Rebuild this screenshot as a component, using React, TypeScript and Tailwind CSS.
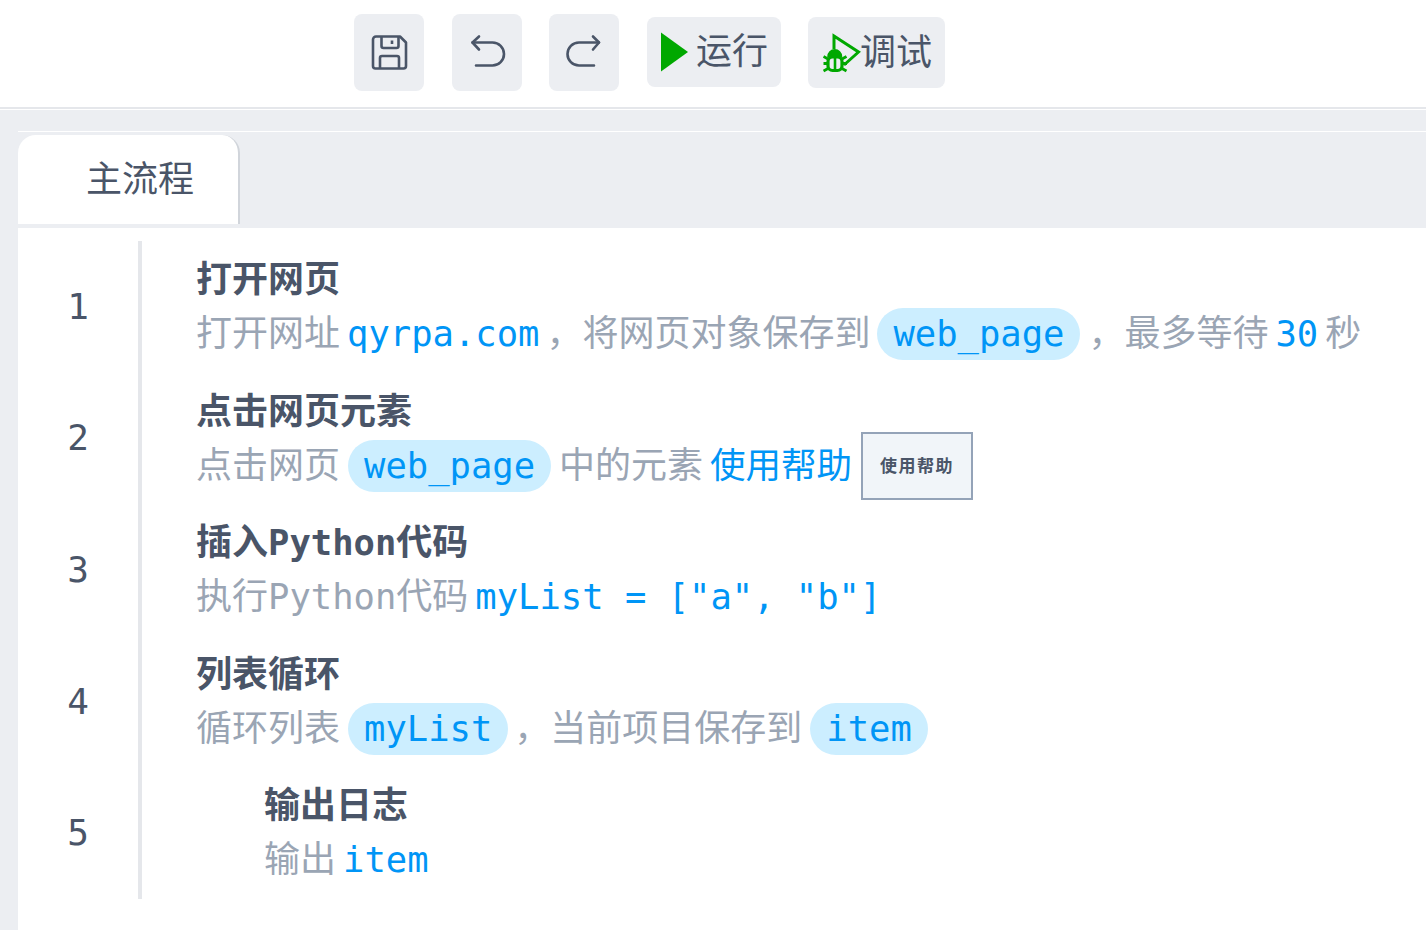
import React from "react";

const mono = "font-['DejaVu_Sans_Mono','Noto_Sans_CJK_SC',monospace]";

function Pill({ children, ml = "ml-[8px]", mr = "mr-[8px]" }: { children: React.ReactNode; ml?: string; mr?: string }) {
  return <span className={"inline-block h-[52px] leading-[52px] text-[35.5px] rounded-[26px] bg-[#cceeff] px-[16px] text-[#0095f6] " + ml + " " + mr}>{children}</span>;
}
function V({ children }: { children: React.ReactNode }) {
  return <span className="text-[#0095f6] text-[35.5px] mx-[7px]">{children}</span>;
}
function L({ children }: { children: React.ReactNode }) {
  return <span className="text-[35.5px]">{children}</span>;
}
function Row({ n, title, children, indent }: { n: number; title: React.ReactNode; children: React.ReactNode; indent?: boolean }) {
  return (
    <div className="flex h-[131.6px] items-center">
      <div className="w-[120px] text-center text-[36px] text-[#4a5568]">{n}</div>
      <div className={"border-l-4 border-[#e5e7eb] h-full flex flex-col pt-[12px] " + (indent ? "pl-[122px]" : "pl-[54px]")}>
        <div className="leading-[54px] font-bold text-[#4a5568] whitespace-nowrap">{title}</div>
        <div className="h-[54px] leading-[54px] text-[#9aa5b4] whitespace-nowrap flex items-center">{children}</div>
      </div>
    </div>
  );
}
function Btn({ children }: { children: React.ReactNode }) {
  return <div className="mt-[14px] w-[70px] h-[77px] bg-[#eceef2] rounded-lg flex items-center justify-center">{children}</div>;
}

export default function App() {
  return (
    <div className={"w-[1426px] h-[930px] overflow-hidden bg-[#eceef2] text-[36px] " + mono}>
      <div className="h-[107px] bg-white flex items-start pl-[354px] gap-7">
        <Btn>
          <svg width="40" height="40" viewBox="0 0 40 40" fill="none" stroke="#4a5568" strokeWidth="2.6" strokeLinejoin="round">
            <path d="M7 3.5H31L37 9.5V33A2.5 2.5 0 0 1 34.5 35.5H6.5A2.5 2.5 0 0 1 4 33V6.5A3 3 0 0 1 7 3.5Z" />
            <path d="M12.5 3.5V13A2 2 0 0 0 14.5 15H27.5A2 2 0 0 0 29.5 13V3.5" />
            <path d="M11 35.5V25A2 2 0 0 1 13 23H28A2 2 0 0 1 30 25V35.5" />
            <path d="M23 7.5V11" />
          </svg>
        </Btn>
        <Btn>
          <svg width="40" height="40" viewBox="0 0 40 40" fill="none" stroke="#4a5568" strokeWidth="2.6" strokeLinecap="round" strokeLinejoin="round">
            <path d="M12 3.5L5.5 9.5L12 16.5" />
            <path d="M5.5 9.5H25.5A11.5 11.5 0 0 1 25.5 32.5H9" />
          </svg>
        </Btn>
        <div className="-ml-[1px]">
          <Btn>
            <svg width="40" height="40" viewBox="0 0 40 40" fill="none" stroke="#4a5568" strokeWidth="2.6" strokeLinecap="round" strokeLinejoin="round">
              <path d="M29 3.5L35 9.5L29 16.5" />
              <path d="M35 9.5H15A11.5 11.5 0 0 0 15 32.5H30" />
            </svg>
          </Btn>
        </div>
        <div className="mt-[17px] w-[134px] h-[70px] bg-[#eceef2] rounded-lg flex items-center pl-[14px] text-[#4a5568]">
          <svg width="28" height="40" viewBox="0 0 28 40"><path d="M0 0.5L27 20L0 39.5Z" fill="#00a800" /></svg>
          <span className="ml-[7px] leading-[70px] -mt-[1px]">运行</span>
        </div>
        <div className="-ml-[1px] mt-[17px] w-[137px] h-[71px] bg-[#eceef2] rounded-lg flex items-center pl-[15px] text-[#4a5568]">
          <svg width="38" height="42" viewBox="0 0 38 42" fill="none">
            <path d="M11 17V4L35.5 20L21 33" stroke="#00a800" strokeWidth="3" />
            <path d="M5 24.5A6.5 6.5 0 0 1 18.5 24.5Z" fill="#00a800" stroke="#00a800" strokeWidth="1.5" />
            <rect x="5" y="25" width="14" height="13.5" rx="4.5" fill="#eceef2" stroke="#00a800" strokeWidth="3.2" />
            <path d="M12 25V38" stroke="#00a800" strokeWidth="2.6" />
            <path d="M0.5 24.5L5 27M0.5 31.5H5M0.5 39L5 36.5M23.5 24.5L19 27M24 31.5H19M23.5 39L19 36.5" stroke="#00a800" strokeWidth="2.8" />
          </svg>
          <span className="leading-[71px] -mt-[1px] -ml-[1px]">调试</span>
        </div>
      </div>
      <div className="h-[2px] bg-[#e5e7eb]" />
      <div className="h-px bg-white" />
      <div className="h-[21px]" />
      <div className="ml-[18px] h-px bg-white" />
      <div className="h-[3px]" />
      <div className="ml-[18px] w-[222px] h-[89px] bg-white rounded-t-[18px] border-r-2 border-[#d1d5db] text-[#4a5568] flex items-center pl-[68px] leading-none">主流程</div>
      <div className="h-[4px]" />
      <div className="ml-[18px] h-[702px] bg-white pt-[13px]">
        <Row n={1} title="打开网页">打开网址<V>qyrpa.com</V><span>，</span>将网页对象保存到<Pill ml="ml-[7px]">web_page</Pill><span>，</span>最多等待<V>30</V>秒</Row>
        <Row n={2} title="点击网页元素">点击网页<Pill>web_page</Pill>中的元素<V>使用帮助</V>
          <span className="-my-[7px] ml-[2px] w-[112px] h-[68px] border-2 border-[#94a3b8] bg-[#f1f5f9] text-[#4a5568] text-[17px] tracking-[1.5px] font-bold flex items-center justify-center">使用帮助</span>
        </Row>
        <Row n={3} title={<>插入<L>Python</L>代码</>}>执行<L>Python</L>代码<V>{'myList = ["a", "b"]'}</V></Row>
        <Row n={4} title="列表循环">循环列表<Pill mr="mr-[6px]">myList</Pill><span>，</span>当前项目保存到<Pill>item</Pill></Row>
        <Row n={5} title="输出日志" indent>输出<V>item</V></Row>
      </div>
    </div>
  );
}
